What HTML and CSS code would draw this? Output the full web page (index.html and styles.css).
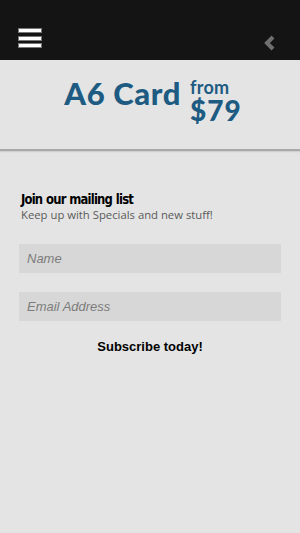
FILE: index.html
```html
<!DOCTYPE html>
<html lang="en">
<head>
  <meta charset="UTF-8" />
  <meta name="viewport" content="width=device-width, initial-scale=1.0"/>
  <title>A6 Card</title>
  <link rel="stylesheet" href="styles.css">
</head>
<body>
  <!-- Top bar -->
  <header class="topbar">
    <div class="menu-icon">
      <span></span>
      <span></span>
      <span></span>
    </div>
    <svg class="back-icon" width="12" height="16" viewBox="0 0 12 16">
      <path d="M9 2 L3 8 L9 14" fill="none" stroke="#6f6f6f" stroke-width="4"/>
    </svg>
  </header>

  <!-- Banner -->
  <div class="banner">
    <span class="banner-title">A6 Card</span>
    <span class="banner-price">
      <span class="from">from</span>
      <span class="amount">$79</span>
    </span>
  </div>

  <!-- Mailing list -->
  <section class="signup">
    <h2>Join our mailing list</h2>
    <p>Keep up with Specials and new stuff!</p>
    <form class="signup-form">
      <input type="text" placeholder="Name" />
      <input type="email" placeholder="Email Address" />
      <button type="submit">Subscribe today!</button>
    </form>
  </section>
</body>
</html>
```

FILE: styles.css
```css
body {
  margin: 0;
  background-color: #e4e4e4;
  font-family: "Liberation Sans", Arial, sans-serif;
}
.topbar {
  height: 40px;
  padding: 20px 24px 0 18px;
  background-color: #141414;
  display: flex;
  align-items: center;
  justify-content: space-between;
}
.menu-icon {
  display: flex;
  flex-direction: column;
  gap: 2.5px;
  margin-top: -4px;
}
.menu-icon span {
  display: block;
  width: 22px;
  height: 3px;
  background-color: #fff;
  border: 1px solid #777;
}
.back-icon {
  margin-top: 5px;
}
.banner {
  height: 76px;
  padding: 13px 0 0 6px;
  border-bottom: 2px solid #a9a9a9;
  box-shadow: 0 1px 1px #d0d0d0;
  display: flex;
  align-items: flex-start;
  justify-content: center;
  gap: 9px;
  color: #1d5b82;
  font-family: Lato, sans-serif;
  font-weight: 900;
}
.banner-title {
  font-size: 31px;
  line-height: 40px;
  letter-spacing: 0.6px;
}
.banner-price {
  display: flex;
  flex-direction: column;
  margin-top: 5px;
}
.from {
  font-size: 18px;
  line-height: 18px;
  font-weight: 700;
  letter-spacing: 0.3px;
}
.amount {
  font-size: 28px;
  line-height: 28px;
  letter-spacing: 1px;
}
.signup {
  padding: 40px 19px 0;
}
.signup h2 {
  margin: 0 0 0 2px;
  font-family: "DejaVu Sans Condensed", "DejaVu Sans", sans-serif;
  font-stretch: condensed;
  font-weight: 700;
  font-size: 14.5px;
  color: #000;
  letter-spacing: -0.9px;
  word-spacing: 0.5px;
  transform: scaleX(0.89);
  transform-origin: left;
}
.signup p {
  margin: 0 0 0 2px;
  font-family: "Open Sans", sans-serif;
  font-size: 11.3px;
  color: #5a5a5a;
}
.signup-form {
  display: flex;
  flex-direction: column;
  margin-top: 22px;
}
.signup-form input {
  height: 29px;
  border: none;
  background-color: #d7d7d7;
  padding: 0 8px;
  margin-bottom: 19px;
  font-family: "Liberation Sans", Arial, sans-serif;
  font-style: italic;
  font-size: 13px;
}
.signup-form input::placeholder {
  color: #7c7c7c;
}
.signup-form button {
  background: none;
  border: none;
  margin-top: -2px;
  font-family: "Liberation Sans", Arial, sans-serif;
  font-weight: 700;
  font-size: 13px;
  color: #000;
}
```
